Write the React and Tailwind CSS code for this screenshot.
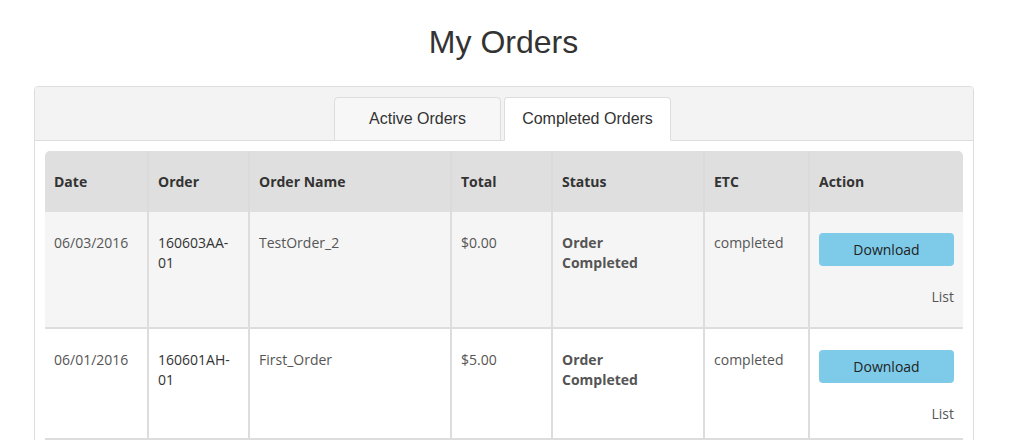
const orders = [
  {
    date: '06/03/2016',
    order: ['160603AA-', '01'],
    name: 'TestOrder_2',
    total: '$0.00',
    etc: 'completed',
  },
  {
    date: '06/01/2016',
    order: ['160601AH-', '01'],
    name: 'First_Order',
    total: '$5.00',
    etc: 'completed',
  },
];

const cols = ['Date', 'Order', 'Order Name', 'Total', 'Status', 'ETC', 'Action'];
const widths = ['w-[103px]', 'w-[101px]', 'w-[202px]', 'w-[101px]', 'w-[152px]', 'w-[105px]', 'w-[154px]'];

const App = () => {
  return (
    <div className="min-h-screen bg-white overflow-hidden">
      {/* Title */}
      <h1 className="mt-[24px] h-[36px] pr-[9px] text-center text-[32px] leading-[36px] text-[#333] font-['Liberation_Sans',Arial,sans-serif]">
        My Orders
      </h1>

      {/* Panel */}
      <div className="mt-[26px] ml-[34px] w-[940px] border border-[#ddd] rounded-t-[4px] bg-white">
        <div className="h-[54px] bg-[#f3f3f3] border-b border-[#ddd] rounded-t-[4px] flex justify-center items-end gap-[3px] pt-[10px] pr-[3px]">
          <button className="w-[167px] h-[44px] -mb-px bg-[#f7f7f7] border border-[#ddd] rounded-t-[4px] text-[16px] text-[#333] font-['Liberation_Sans',Arial,sans-serif]">
            Active Orders
          </button>
          <button className="w-[167px] h-[44px] -mb-px bg-white border border-[#ddd] border-b-white rounded-t-[4px] text-[16px] text-[#333] font-['Liberation_Sans',Arial,sans-serif]">
            Completed Orders
          </button>
        </div>

        <div className="px-[10px] pt-[10px] pb-[20px]">
          <table className="table-fixed border-collapse w-[918px] font-['Open_Sans',sans-serif] text-[14px] leading-[20px]">
            <thead>
              <tr className="h-[61px] bg-[#e0dfdf] text-[#333]">
                {cols.map((c, i) => (
                  <th
                    key={c}
                    className={`${widths[i]} text-left font-bold px-[9px] align-middle border-x-2 border-[#dcdbdb] first:border-l-0 last:border-r-0 ${i === 0 ? 'rounded-tl-[5px]' : ''} ${i === 6 ? 'rounded-tr-[5px]' : ''}`}
                  >
                    {c}
                  </th>
                ))}
              </tr>
            </thead>
            <tbody>
              {orders.map((o, r) => (
                <tr key={o.date} className={r === 0 ? 'bg-[#f5f5f5]' : 'bg-white'}>
                  <td className="align-top px-[9px] pt-[21px] text-[#555] border-2 border-[#ddd] border-t-0 first:border-l-0">
                    {o.date}
                  </td>
                  <td className="align-top px-[9px] pt-[21px] text-[#333] border-2 border-[#ddd] border-t-0">
                    {o.order[0]}
                    <br />
                    {o.order[1]}
                  </td>
                  <td className="align-top px-[9px] pt-[21px] text-[#555] border-2 border-[#ddd] border-t-0">
                    {o.name}
                  </td>
                  <td className="align-top px-[9px] pt-[21px] text-[#555] border-2 border-[#ddd] border-t-0">
                    {o.total}
                  </td>
                  <td className="align-top px-[9px] pt-[21px] text-[#555] font-bold border-2 border-[#ddd] border-t-0">
                    Order
                    <br />
                    Completed
                  </td>
                  <td className="align-top px-[9px] pt-[21px] text-[#555] border-2 border-[#ddd] border-t-0">
                    {o.etc}
                  </td>
                  <td
                    className={`align-top px-[9px] pt-[21px] border-2 border-[#ddd] border-t-0 last:border-r-0 ${r === 0 ? 'pb-[20px]' : 'pb-[14px]'}`}
                  >
                    <button className="w-full h-[33px] rounded-[4px] bg-[#7dcbe9] text-[#222] text-[14px]">
                      Download
                    </button>
                    <div className="mt-[21px] text-right text-[#555]">List</div>
                  </td>
                </tr>
              ))}
            </tbody>
          </table>
        </div>
      </div>
    </div>
  );
};

export default App;
